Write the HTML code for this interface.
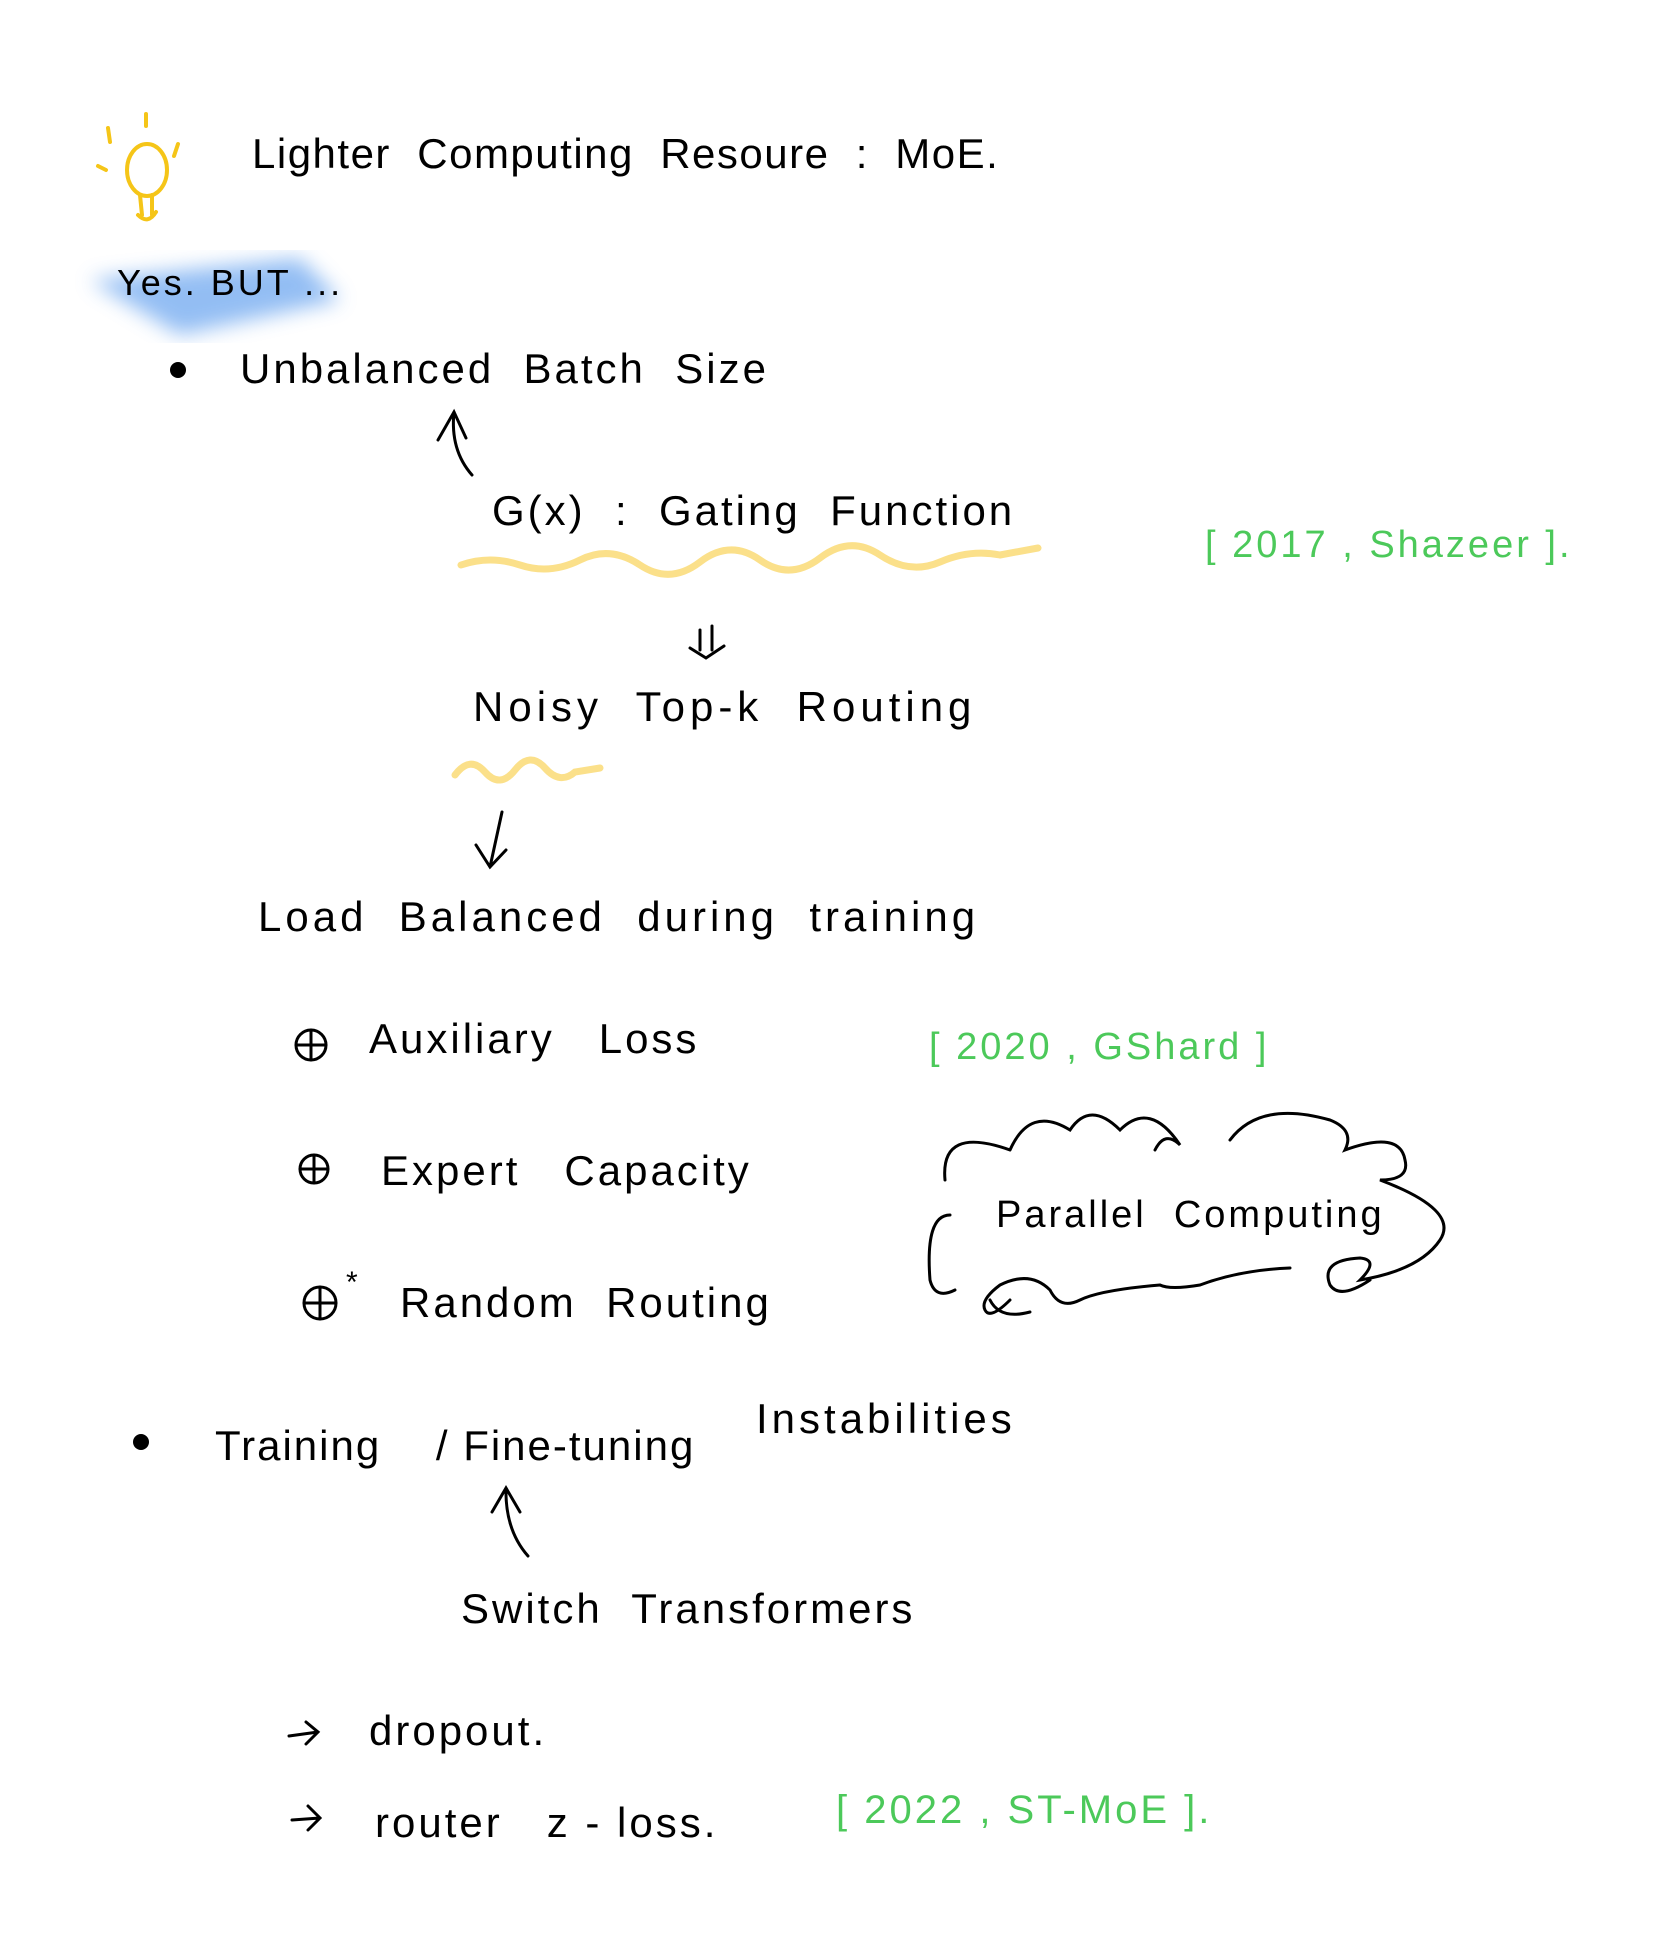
<!DOCTYPE html>
<html><head><meta charset="utf-8"><style>
html,body{margin:0;padding:0;background:#fff;}
body{width:1668px;height:1938px;position:relative;overflow:hidden;font-family:"Liberation Sans",sans-serif;color:#000;}
.t{position:absolute;white-space:nowrap;font-size:42px;line-height:1;letter-spacing:3px;}
.g{color:#4cc95a;}
svg{position:absolute;left:0;top:0;}
</style></head><body>
<svg width="1668" height="1938" viewBox="0 0 1668 1938">
<defs><filter id="b"><feGaussianBlur stdDeviation="10"/></filter></defs>
<path d="M90 280 L300 258 L340 300 L180 335 Z" fill="#6fa8f0" opacity="0.75" filter="url(#b)"/>
<g fill="none" stroke="#f5c518" stroke-width="4" stroke-linecap="round">
<ellipse cx="147" cy="170" rx="20" ry="26"/>
<path d="M140 195 L142 215 M152 195 L152 215 M138 215 Q148 225 156 212"/>
<path d="M108 128 L110 142 M146 114 L146 126 M178 144 L174 156 M98 166 L106 170"/>
</g>
<circle cx="178" cy="370" r="8" fill="#000"/>
<circle cx="141" cy="1442" r="8" fill="#000"/>
<g fill="none" stroke="#000" stroke-width="3" stroke-linecap="round">
<path d="M472 475 Q450 450 454 412 M438 440 L454 412 L466 438"/>
<path d="M700 630 L700 650 M712 626 L712 650 M690 648 L706 658 L724 646"/>
<path d="M502 812 L490 867 M476 845 L490 867 L506 850"/>
<path d="M528 1556 Q505 1530 506 1488 M492 1512 L506 1488 L520 1512"/>
<circle cx="311" cy="1045" r="15"/><path d="M296 1045 H326 M311 1030 V1060"/>
<circle cx="314" cy="1169" r="14"/><path d="M300 1169 H328 M314 1155 V1183"/>
<circle cx="320" cy="1303" r="16"/><path d="M304 1303 H336 M320 1287 V1319"/>
<path d="M289 1736 L318 1732 M306 1722 L318 1732 L306 1744"/>
<path d="M292 1820 L320 1818 M308 1806 L320 1818 L308 1830"/>
<path d="M950 1215 Q925 1215 930 1280 Q935 1300 955 1290 M1010 1150 Q940 1125 945 1180 M1010 1150 Q1030 1105 1070 1130 Q1090 1100 1120 1130 Q1150 1100 1180 1145 Q1165 1130 1155 1150 M1230 1140 Q1260 1100 1330 1120 Q1355 1130 1345 1150 Q1400 1130 1405 1160 Q1410 1180 1380 1180 Q1460 1210 1440 1240 Q1420 1270 1360 1280 Q1380 1260 1360 1258 Q1320 1260 1330 1285 Q1340 1300 1370 1280 M1290 1268 Q1240 1270 1200 1285 Q1170 1290 1160 1285 Q1100 1290 1080 1300 Q1060 1310 1050 1290 Q1030 1270 1000 1285 Q980 1300 985 1310 Q990 1320 1010 1300 M1030 1312 Q1000 1320 990 1300"/>
</g>
<g fill="none" stroke="#fbe08a" stroke-width="7" stroke-linecap="round">
<path d="M461 565 Q490 555 520 565 T580 560 T640 565 T700 562 T760 560 T820 558 T880 555 T940 562 T1000 555 L1038 548"/>
<path d="M455 775 Q470 755 485 772 T515 770 T545 768 T575 772 L600 768"/>
</g>
</svg>
<div class="t" style="left:252px;top:133px;letter-spacing:1.5px;">Lighter&nbsp; Computing&nbsp; Resoure&nbsp; :&nbsp; MoE.</div>
<div class="t" style="left:117px;top:265px;font-size:36px;">Yes. BUT ...</div>
<div class="t" style="left:240px;top:348px;">Unbalanced&nbsp; Batch&nbsp; Size</div>
<div class="t" style="left:492px;top:490px;">G(x)&nbsp; :&nbsp; Gating&nbsp; Function</div>
<div class="t g" style="left:1205px;top:526px;font-size:38px;">[ 2017 , Shazeer ].</div>
<div class="t" style="left:473px;top:686px;letter-spacing:5px;">Noisy&nbsp; Top-k&nbsp; Routing</div>
<div class="t" style="left:258px;top:896px;letter-spacing:4px;">Load&nbsp; Balanced&nbsp; during&nbsp; training</div>
<div class="t" style="left:369px;top:1018px;">Auxiliary&nbsp;&nbsp; Loss</div>
<div class="t g" style="left:929px;top:1028px;font-size:38px;">[ 2020 , GShard ]</div>
<div class="t" style="left:381px;top:1150px;">Expert&nbsp;&nbsp; Capacity</div>
<div class="t" style="left:346px;top:1268px;font-size:30px;">*</div>
<div class="t" style="left:400px;top:1282px;">Random&nbsp; Routing</div>
<div class="t" style="left:996px;top:1196px;font-size:38px;">Parallel&nbsp; Computing</div>
<div class="t" style="left:215px;top:1425px;letter-spacing:2px;">Training&nbsp;&nbsp;&nbsp; / Fine-tuning</div>
<div class="t" style="left:756px;top:1398px;letter-spacing:4px;">Instabilities</div>
<div class="t" style="left:461px;top:1588px;">Switch&nbsp; Transformers</div>
<div class="t" style="left:369px;top:1710px;">dropout.</div>
<div class="t" style="left:375px;top:1802px;">router&nbsp;&nbsp; z - loss.</div>
<div class="t g" style="left:836px;top:1790px;font-size:40px;">[ 2022 , ST-MoE ].</div>
</body></html>
